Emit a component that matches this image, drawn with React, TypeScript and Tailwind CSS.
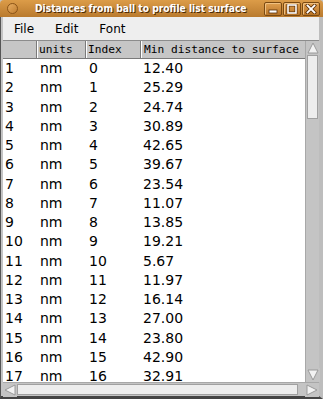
import React from 'react';

// Distances table window (Java Swing style on a GNOME frame)

const values = [
  '12.40', '25.29', '24.74', '30.89', '42.65', '39.67', '23.54', '11.07', '13.85',
  '19.21', '5.67', '11.97', '16.14', '27.00', '23.80', '42.90', '32.91', '18.02',
];

const rows = values.map((v, i) => ({ id: i + 1, units: 'nm', index: i, value: v }));

const TitleButton: React.FC<{ kind: 'min' | 'max' | 'close' }> = ({ kind }) => (
  <div className="w-[18px] h-[14px] shrink-0 rounded-[2px] border border-[#7a4a12] bg-gradient-to-b from-[#e0a050] to-[#b87426] shadow-[inset_1px_1px_0_#f0c080] flex items-center justify-center">
    <svg width="12" height="10" viewBox="0 0 12 10">
      {kind === 'min' && (
        <rect x="2" y="6" width="8" height="3" fill="#fff" stroke="#5a3008" strokeWidth="0.8" />
      )}
      {kind === 'max' && (
        <g>
          <rect x="2" y="1" width="8" height="8" fill="none" stroke="#5a3008" strokeWidth="3" />
          <rect x="2" y="1" width="8" height="8" fill="none" stroke="#fff" strokeWidth="1.6" />
        </g>
      )}
      {kind === 'close' && (
        <g strokeLinecap="square">
          <path d="M2.5 1.5 L9.5 8.5 M9.5 1.5 L2.5 8.5" stroke="#5a3008" strokeWidth="3.4" />
          <path d="M2.5 1.5 L9.5 8.5 M9.5 1.5 L2.5 8.5" stroke="#fff" strokeWidth="1.8" />
        </g>
      )}
    </svg>
  </div>
);

const Arrow: React.FC<{ dir: 'up' | 'down' | 'left' | 'right' }> = ({ dir }) => {
  const pts = {
    up: '7,2 12,12 2,12',
    down: '2,2 12,2 7,12',
    left: '2,7 12,2 12,12',
    right: '2,2 12,7 2,12',
  }[dir];
  return (
    <div className="w-[14px] h-[14px] shrink-0 bg-[#c4c4c4] flex items-center justify-center">
      <svg width="14" height="14" viewBox="0 0 14 14">
        <polygon points={pts} fill="#f2f2f2" stroke="#9a9a9a" strokeWidth="1" />
      </svg>
    </div>
  );
};

export default function App() {
  return (
    <div className="w-[323px] h-[399px] flex flex-col bg-[#c4c4c4] overflow-hidden">
      {/* Title bar */}
      <div className="h-[17px] shrink-0 flex items-center bg-gradient-to-b from-[#dc9c48] to-[#b97a2e] rounded-t-[4px] overflow-hidden">
        <div className="ml-[7px] w-[11px] h-[11px] shrink-0 rounded-full border border-[#8a5418] bg-gradient-to-br from-[#e8ad60] to-[#c07e30]" />
        <div
          className="ml-[17px] shrink-0 text-white font-bold text-[10.2px] whitespace-nowrap [text-shadow:1px_1px_0_#4a2a08]"
          style={{ fontFamily: '"DejaVu Sans Condensed", "Liberation Sans Narrow", "Liberation Sans", sans-serif' }}
        >
          Distances from ball to profile list surface
        </div>
        <div className="ml-auto mr-[3px] flex gap-[1px]">
          <TitleButton kind="min" />
          <TitleButton kind="max" />
          <TitleButton kind="close" />
        </div>
      </div>

      {/* Window body */}
      <div
        className="flex-1 flex flex-col border-l border-r-[4px] border-b-[3px] border-l-[#555] border-r-[#bdbdbd] border-b-[#444] pl-[2px] min-h-0"
        style={{ fontFamily: '"DejaVu Sans", sans-serif' }}
      >
        {/* Menu bar */}
        <div className="h-[24px] bg-[#eeeeee] border-b border-b-[#8c8c8c] flex items-center text-[12px] text-black shrink-0">
          <span className="ml-[11px]">File</span>
          <span className="ml-[21px]">Edit</span>
          <span className="ml-[21px]">Font</span>
        </div>

        {/* Scroll pane */}
        <div className="flex-1 flex flex-col min-h-0">
          <div className="flex-1 flex min-h-0">
            <div className="flex-1 bg-white overflow-hidden flex flex-col">
              <div
                className="h-[18px] flex bg-[#c6c6c6] border-b border-b-[#7a7a7a] shrink-0 text-[11.2px] text-black"
                style={{ fontFamily: '"DejaVu Sans Mono", monospace' }}
              >
                <div className="w-[34px] shrink-0 border-r border-r-[#7a7a7a]" />
                <div className="w-[49px] shrink-0 border-l border-l-white border-r border-r-[#7a7a7a] pl-[1px] leading-[17px]">units</div>
                <div className="w-[55px] shrink-0 border-l border-l-white border-r border-r-[#7a7a7a] pl-[1px] leading-[17px]">Index</div>
                <div className="w-[170px] shrink-0 border-l border-l-white pl-[2px] leading-[17px] whitespace-nowrap">Min distance to surface</div>
              </div>
              <div className="text-[14px] text-black">
                {rows.map((r) => (
                  <div key={r.id} className="h-[19.25px] flex items-center whitespace-nowrap">
                    <div className="w-[34px] shrink-0 pl-[2px]">{r.id}</div>
                    <div className="w-[49px] shrink-0 pl-[3px]">{r.units}</div>
                    <div className="w-[55px] shrink-0 pl-[3px]">{r.index}</div>
                    <div className="pl-[2px]">{r.value}</div>
                  </div>
                ))}
              </div>
            </div>
            {/* Vertical scrollbar */}
            <div className="w-[14px] shrink-0 flex flex-col bg-[#c4c4c4] border-l border-l-[#a8a8a8]">
              <Arrow dir="up" />
              <div className="flex-1 flex flex-col">
                <div className="h-[64px] mx-[1px] bg-[#ededed] border border-[#a0a0a0]" />
              </div>
              <Arrow dir="down" />
            </div>
          </div>
          {/* Horizontal scrollbar */}
          <div className="h-[14px] flex bg-[#c4c4c4] border-t border-t-[#a8a8a8] shrink-0">
            <Arrow dir="left" />
            <div className="w-[281px] my-[1px] bg-[#ededed] border border-[#a0a0a0]" />
            <div className="flex-1" />
            <Arrow dir="right" />
          </div>
        </div>
      </div>
    </div>
  );
}
